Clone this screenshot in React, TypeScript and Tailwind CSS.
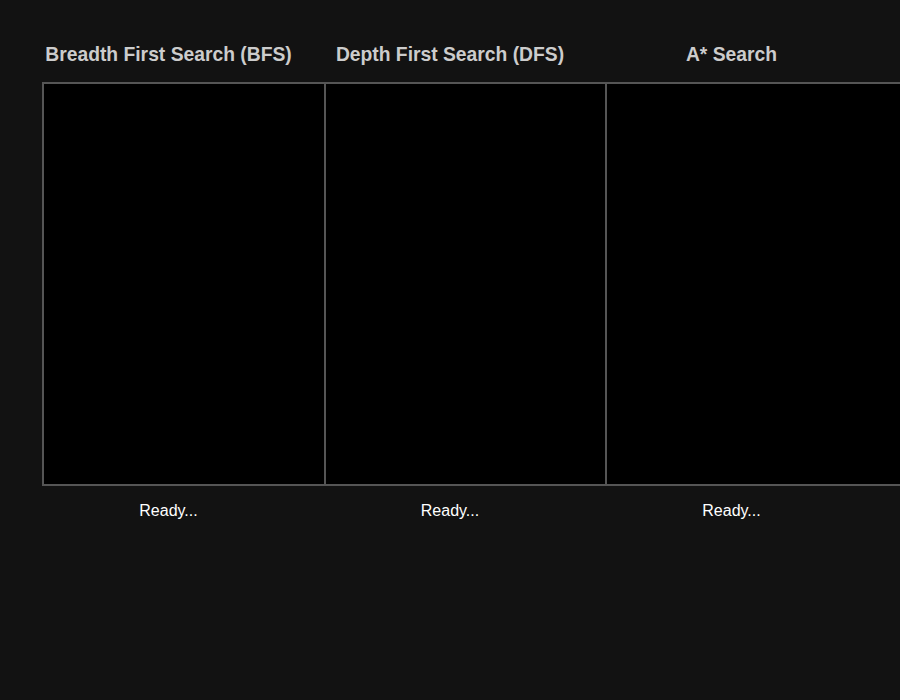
import React from "react";

const cols = ["Breadth First Search (BFS)", "Depth First Search (DFS)", "A* Search"];

export default function App() {
  return (
    <div
      className="h-[700px] w-[900px] overflow-hidden bg-[#121212] pl-[42px] pt-[43px]"
      style={{ fontFamily: '"Liberation Sans", Arial, sans-serif' }}
    >
      <div className="flex gap-[29.5px]">
        {cols.map((t) => (
          <div key={t} className="flex w-[252px] shrink-0 flex-col items-start">
            <h3 className="mt-[1px] w-[253px] whitespace-nowrap text-center text-[19.3px] font-bold leading-[22px] text-[#cccccc]">
              {t}
            </h3>
            <div className="mt-[16px] h-[404px] w-[320px] shrink-0 border-2 border-[#555555] bg-black" />
            <div className="mt-[15px] w-[253px] text-center text-[16px] leading-[20px] text-white">
              Ready...
            </div>
          </div>
        ))}
      </div>
    </div>
  );
}
